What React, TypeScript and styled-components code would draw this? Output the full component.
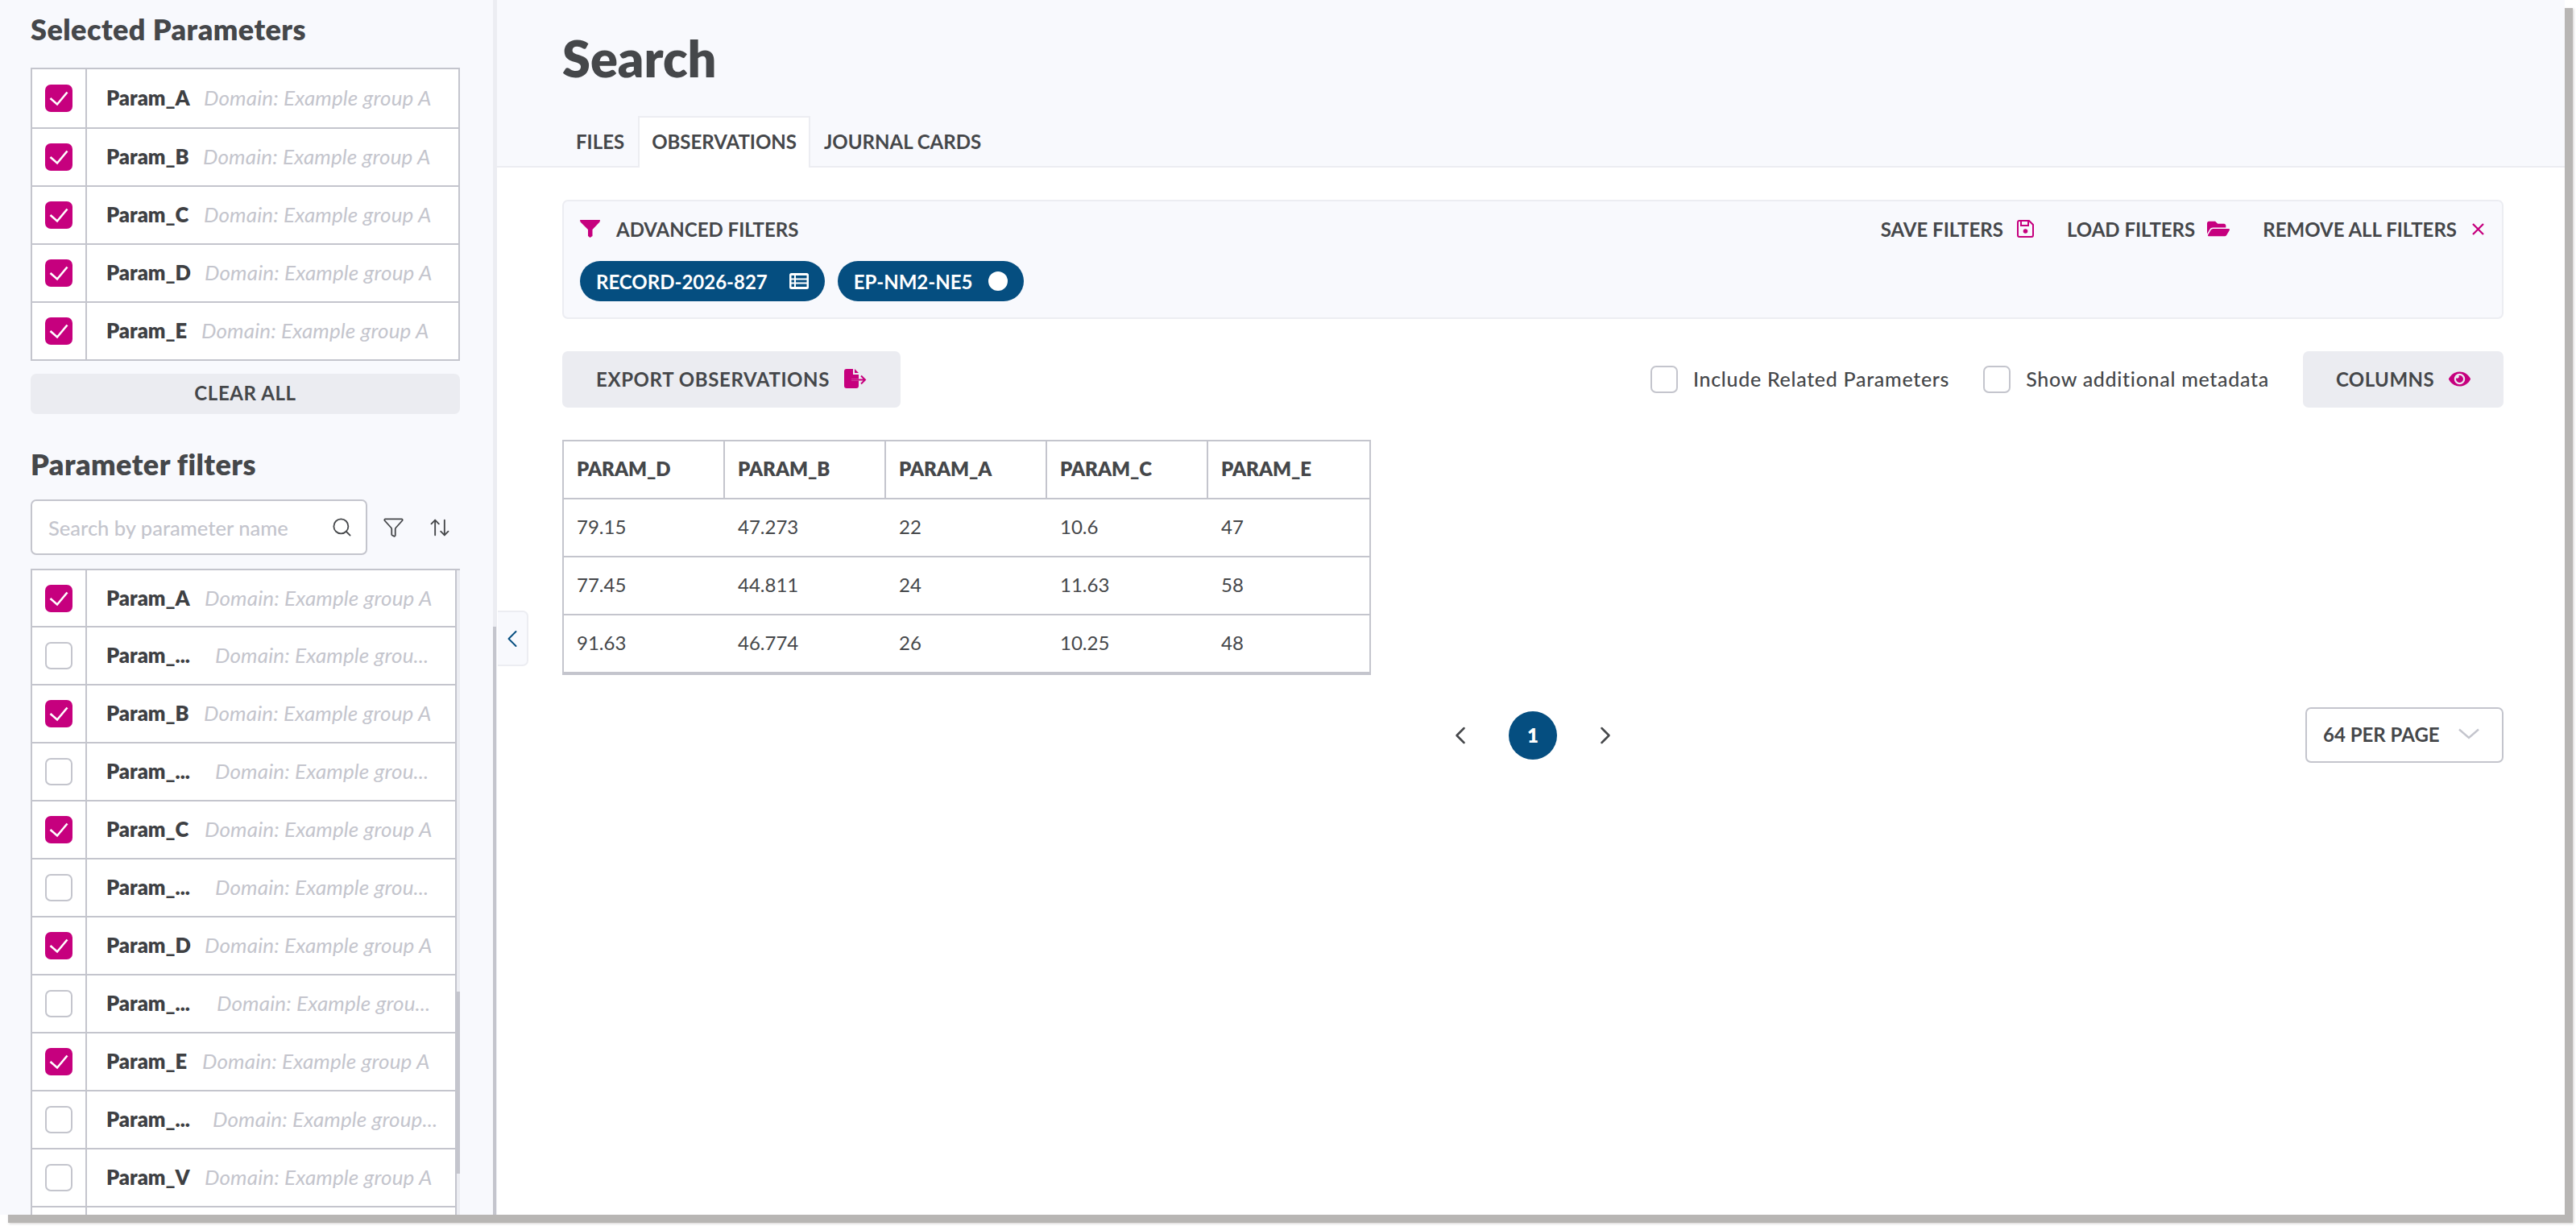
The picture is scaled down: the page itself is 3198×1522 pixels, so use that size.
import React from 'react'
import styled, { createGlobalStyle } from 'styled-components'
import { Search as SearchIcon, Funnel, ArrowUpDown, ChevronLeft, ChevronRight } from 'lucide-react'
import { FaFolderOpen, FaEye } from 'react-icons/fa'

const magenta = '#c6007e'
const navy = '#054e80'
const ink = '#45474a'
const line = '#c4c5cd'
const pale = '#ecedf2'
const wash = '#f8f9fd'

const GlobalStyle = createGlobalStyle`
  html, body { margin: 0; padding: 0; background: #fff; }
  body { font-family: Lato, "Noto Sans", sans-serif; color: ${ink}; }
  * { box-sizing: border-box; }
`

const Page = styled.div`
  width: 3198px;
  height: 1522px;
  background: #fff;
`

const Frame = styled.div`
  position: relative;
  display: flex;
  width: 3184px;
  height: 1508px;
  background: #fff;
  box-shadow: 10px 10px 0 #b8b6b4, 11px 11px 3px #d0cecc;
`

const Sidebar = styled.aside`
  position: relative;
  flex: 0 0 617px;
  height: 100%;
  padding: 14px 46px 0 38px;
  background: ${wash};
  overflow: hidden;
`

const OuterTrack = styled.div`
  position: absolute;
  top: 0;
  bottom: 0;
  right: 0;
  width: 5px;
  background: ${pale};
`

const OuterThumb = styled.div`
  position: absolute;
  top: 778px;
  bottom: 0;
  right: 1px;
  width: 4px;
  background: ${line};
`

const PanelTitle = styled.h2<{ $top?: number }>`
  margin: ${(p) => p.$top || 0}px 0 0 0;
  font-size: 36px;
  line-height: 44px;
  font-weight: 800;
  letter-spacing: 0.45px;
  color: ${ink};
`

const SelectedList = styled.div`
  margin-top: 26px;
  width: 533px;
  border: 2px solid ${line};
  border-bottom: 0;
  background: #fff;
`

const Row = styled.div<{ $first?: number }>`
  display: flex;
  align-items: center;
  height: 72px;
  border-bottom: 2px solid ${line};
  background: #fff;
  &:first-child { height: ${(p) => p.$first || 72}px; }
`

const CheckCell = styled.div`
  flex: 0 0 68px;
  align-self: stretch;
  display: flex;
  align-items: center;
  padding-left: 16px;
  border-right: 2px solid ${line};
`

const Box = styled.span<{ $on?: boolean }>`
  display: inline-flex;
  flex: 0 0 34px;
  width: 34px;
  height: 34px;
  border-radius: 7px;
  background: ${(p) => (p.$on ? magenta : '#fff')};
  border: ${(p) => (p.$on ? '0' : `2px solid ${line}`)};
`

const LabelCell = styled.div`
  display: flex;
  align-items: center;
  padding: 0 0 2px 24px;
  white-space: nowrap;
`

const ParamName = styled.span<{ $width: number }>`
  flex: 0 0 ${(p) => p.$width}px;
  font-size: 25.5px;
  font-weight: 800;
  color: #3e4043;
`

const Domain = styled.span`
  font-size: 26px;
  font-style: italic;
  letter-spacing: 0.15px;
  color: ${line};
`

const ClearButton = styled.button`
  display: block;
  margin-top: 16px;
  width: 533px;
  height: 50px;
  padding: 0 0 3px;
  border: 0;
  border-radius: 7px;
  background: #ebecf1;
  font-family: inherit;
  font-size: 24px;
  font-weight: 700;
  letter-spacing: 0.6px;
  color: ${ink};
`

const SearchRow = styled.div`
  display: flex;
  align-items: center;
  margin-top: 22px;
  height: 69px;
`

const SearchBox = styled.div`
  display: flex;
  align-items: center;
  justify-content: space-between;
  width: 418px;
  height: 69px;
  padding: 0 16px 0 20px;
  background: #fff;
  border: 2px solid ${line};
  border-radius: 7px;
  font-size: 25.5px;
  font-weight: 500;
  color: ${line};
`

const ToolIcon = styled.span<{ $left: number }>`
  display: inline-flex;
  margin-left: ${(p) => p.$left}px;
  color: ${ink};
`

const FilterFrame = styled.div`
  position: relative;
  margin-top: 17px;
  width: 533px;
  border-top: 2px solid ${line};
`

const FilterRows = styled.div`
  width: 529px;
  border-left: 2px solid ${line};
  border-right: 2px solid ${line};
`

const ListTrack = styled.div`
  position: absolute;
  top: 0;
  right: 0;
  width: 4px;
  height: 820px;
  background: ${pale};
`

const ListThumb = styled.div`
  position: absolute;
  top: 523px;
  right: 0;
  width: 4px;
  height: 226px;
  background: ${line};
`

const CollapseTab = styled.button`
  position: absolute;
  top: 758px;
  left: 618px;
  display: flex;
  align-items: center;
  justify-content: center;
  width: 38px;
  height: 69px;
  padding: 0;
  background: ${wash};
  border: 2px solid ${pale};
  border-left: 0;
  border-radius: 0 7px 7px 0;
  color: ${navy};
`

const Main = styled.main`
  flex: 1;
  display: flex;
  flex-direction: column;
  min-width: 0;
`

const Header = styled.header`
  height: 208px;
  padding: 0 0 0 81px;
  background: ${wash};
  border-bottom: 2px solid ${pale};
`

const PageTitle = styled.h1`
  margin: 0;
  height: 144px;
  padding-top: 39px;
  font-size: 63px;
  line-height: 66px;
  font-weight: 800;
  color: ${ink};
`

const Tabs = styled.nav`
  display: flex;
  height: 64px;
`

const Tab = styled.div<{ $active?: boolean }>`
  display: flex;
  align-items: center;
  height: 64px;
  padding: 0 15px 3px;
  font-size: 24px;
  font-weight: 700;
  white-space: nowrap;
  color: ${ink};
  border: 2px solid ${(p) => (p.$active ? pale : 'transparent')};
  border-bottom: 0;
  background: ${(p) => (p.$active ? '#fff' : 'transparent')};
`

const Content = styled.div`
  padding: 40px 76px 0 81px;
`

const FilterPanel = styled.section`
  height: 148px;
  padding: 14px 21px 0 20px;
  background: ${wash};
  border: 2px solid ${pale};
  border-radius: 7px;
`

const PanelHead = styled.div`
  display: flex;
  align-items: center;
  justify-content: space-between;
  height: 40px;
`

const HeadLabel = styled.div`
  display: flex;
  align-items: center;
  font-size: 24px;
  font-weight: 700;
  white-space: nowrap;
`

const Actions = styled.div`
  display: flex;
  align-items: center;
`

const ActionLink = styled.span<{ $gap?: number }>`
  display: flex;
  align-items: center;
  margin-left: ${(p) => p.$gap || 0}px;
  font-size: 24px;
  font-weight: 700;
  white-space: nowrap;
`

const IconSlot = styled.span<{ $gap: number; $color?: string }>`
  display: inline-flex;
  margin-left: ${(p) => p.$gap}px;
  color: ${(p) => p.$color || magenta};
`

const Chips = styled.div`
  display: flex;
  gap: 16px;
  margin-top: 20px;
`

const Chip = styled.div`
  display: flex;
  align-items: center;
  height: 50px;
  padding: 0 20px;
  border-radius: 25px;
  background: ${navy};
  color: #fff;
  font-size: 24px;
  font-weight: 700;
  white-space: nowrap;
`

const Dot = styled.span`
  display: inline-block;
  width: 24px;
  height: 24px;
  margin-left: 20px;
  border-radius: 50%;
  background: #fff;
`

const Toolbar = styled.div`
  display: flex;
  align-items: center;
  justify-content: space-between;
  margin-top: 40px;
`

const GreyButton = styled.button<{ $width: number; $spacing?: number }>`
  display: flex;
  align-items: center;
  justify-content: center;
  width: ${(p) => p.$width}px;
  height: 70px;
  padding: 0 0 2px;
  border: 0;
  border-radius: 7px;
  background: #ebecf1;
  color: ${ink};
  font-family: inherit;
  font-size: 24px;
  font-weight: 700;
  letter-spacing: ${(p) => p.$spacing || 0}px;
  white-space: nowrap;
`

const ToolbarRight = styled.div`
  display: flex;
  align-items: center;
`

const Toggle = styled.label`
  display: flex;
  align-items: center;
  margin-right: 42px;
  font-size: 25px;
  font-weight: 500;
  letter-spacing: 0.7px;
  white-space: nowrap;
`

const ToggleText = styled.span`
  margin: 0 0 2px 19px;
`

const DataTable = styled.table`
  margin-top: 40px;
  width: 1004px;
  table-layout: fixed;
  border-collapse: separate;
  border-spacing: 0;
  border: 2px solid ${line};
  font-size: 24px;
`

const HeadCell = styled.th`
  height: 72px;
  padding: 0 0 3px 16px;
  text-align: left;
  font-weight: 800;
  border-bottom: 2px solid ${line};
  border-right: 2px solid ${line};
  &:last-child { border-right: 0; }
`

const BodyCell = styled.td`
  height: 72px;
  padding: 0 0 3px 16px;
  font-weight: 400;
  border-bottom: 2px solid ${line};
`

const PagerRow = styled.div`
  display: grid;
  grid-template-columns: 1fr auto 1fr;
  align-items: center;
  margin-top: 40px;
  height: 69px;
`

const Pager = styled.div`
  grid-column: 2;
  display: flex;
  align-items: center;
  gap: 42px;
  color: ${ink};
`

const PageDot = styled.span`
  display: flex;
  align-items: center;
  justify-content: center;
  width: 60px;
  height: 60px;
  border-radius: 50%;
  background: ${navy};
  color: #fff;
  font-size: 24px;
  font-weight: 800;
`

const PerPage = styled.div`
  grid-column: 3;
  justify-self: end;
  display: flex;
  align-items: center;
  justify-content: space-between;
  width: 246px;
  height: 69px;
  padding: 0 28px 3px 20px;
  border: 2px solid ${line};
  border-radius: 7px;
  font-size: 24px;
  font-weight: 700;
  white-space: nowrap;
`

const Tick = () => (
  <svg width="34" height="34" viewBox="0 0 34 34" fill="none">
    <path d="M6.5 17 L15 24.5 L27.5 9.500" stroke="#fff" strokeWidth="2.6" />
  </svg>
)

const CheckBox = ({ on }: { on?: boolean }) => <Box $on={on}>{on && <Tick />}</Box>

const FunnelSolid = () => (
  <svg width="25" height="22" viewBox="0 0 25 22">
    <path d="M0 0 H25 L24.500 2.500 L15.500 12 V20 L12.500 22 L10 20 V12 L0.500 2.500 Z" fill={magenta} />
  </svg>
)

const TableGlyph = () => (
  <svg width="24" height="20" viewBox="0 0 24 20">
    <path
      fillRule="evenodd"
      d="M2.500 0 H21.500 A2.500 2.500 0 0 1 24 2.500 V17.500 A2.500 2.500 0 0 1 21.500 20 H2.500 A2.500 2.500 0 0 1 0 17.500 V2.500 A2.500 2.500 0 0 1 2.500 0 Z M2.500 3 V6.500 H6 V3 Z M8 3 V6.500 H21.500 V3 Z M2.500 8.500 V11.500 H6 V8.500 Z M8 8.500 V11.500 H21.500 V8.500 Z M2.500 13.500 V17 H6 V13.500 Z M8 13.500 V17 H21.500 V13.500 Z"
      fill="#fff"
    />
  </svg>
)

const SaveGlyph = () => (
  <svg width="21" height="22" viewBox="0 0 21 22" fill="none">
    <path d="M3 1 H15 L20 6 V19 A2 2 0 0 1 18 21 H3 A2 2 0 0 1 1 19 V3 A2 2 0 0 1 3 1 Z" stroke={magenta} strokeWidth="2" />
    <path d="M5 1.500 V7 H14 V1.500" stroke={magenta} strokeWidth="2" />
    <circle cx="10.500" cy="14" r="2.800" fill={magenta} />
  </svg>
)

const ExportGlyph = () => (
  <svg width="28" height="24" viewBox="0 0 28 24">
    <path d="M3 0 H11 V7 H18 V12.500 H9 V14.500 H18 V21 A3 3 0 0 1 15 24 H3 A3 3 0 0 1 0 21 V3 A3 3 0 0 1 3 0 Z" fill={magenta} />
    <path d="M13 0 L18 5 H13 Z" fill={magenta} />
    <path d="M9 13.500 H26 M21 8.500 L26 13.500 L21 18.500" stroke={magenta} strokeWidth="2" fill="none" />
  </svg>
)

const CrossGlyph = () => (
  <svg width="17" height="15" viewBox="0 0 17 15" fill="none">
    <path d="M2 1 L15 14 M15 1 L2 14" stroke={magenta} strokeWidth="2.300" />
  </svg>
)

const WideChevron = () => (
  <svg width="26" height="14" viewBox="0 0 26 14" fill="none">
    <path d="M1 1.500 L13 12 L25 1.500" stroke={line} strokeWidth="2.400" />
  </svg>
)

const selected = [
  { name: 'Param_A', width: 121 },
  { name: 'Param_B', width: 120 },
  { name: 'Param_C', width: 121 },
  { name: 'Param_D', width: 122 },
  { name: 'Param_E', width: 118 },
]

const filterRows = [
  { name: 'Param_A', domain: 'Domain: Example group A', on: true, width: 122 },
  { name: 'Param_...', domain: 'Domain: Example grou...', width: 135 },
  { name: 'Param_B', domain: 'Domain: Example group A', on: true, width: 121 },
  { name: 'Param_...', domain: 'Domain: Example grou...', width: 135 },
  { name: 'Param_C', domain: 'Domain: Example group A', on: true, width: 122 },
  { name: 'Param_...', domain: 'Domain: Example grou...', width: 135 },
  { name: 'Param_D', domain: 'Domain: Example group A', on: true, width: 122 },
  { name: 'Param_...', domain: 'Domain: Example grou...', width: 137 },
  { name: 'Param_E', domain: 'Domain: Example group A', on: true, width: 119 },
  { name: 'Param_...', domain: 'Domain: Example group...', width: 132 },
  { name: 'Param_V', domain: 'Domain: Example group A', width: 122 },
  { name: '', domain: '', width: 0 },
]

const columns = ['PARAM_D', 'PARAM_B', 'PARAM_A', 'PARAM_C', 'PARAM_E']
const rows = [
  ['79.15', '47.273', '22', '10.6', '47'],
  ['77.45', '44.811', '24', '11.63', '58'],
  ['91.63', '46.774', '26', '10.25', '48'],
]

export default function App() {
  return (
    <Page>
      <GlobalStyle />
      <Frame>
        <Sidebar>
          <PanelTitle>Selected Parameters</PanelTitle>
          <SelectedList>
            {selected.map((item) => (
              <Row key={item.name} $first={74}>
                <CheckCell><CheckBox on /></CheckCell>
                <LabelCell>
                  <ParamName $width={item.width}>{item.name}</ParamName>
                  <Domain>Domain: Example group A</Domain>
                </LabelCell>
              </Row>
            ))}
          </SelectedList>
          <ClearButton>CLEAR ALL</ClearButton>
          <PanelTitle $top={40}>Parameter filters</PanelTitle>
          <SearchRow>
            <SearchBox>
              Search by parameter name
              <SearchIcon size={27} strokeWidth={1.6} color={ink} />
            </SearchBox>
            <ToolIcon $left={19}><Funnel size={27} strokeWidth={1.6} /></ToolIcon>
            <ToolIcon $left={30}><ArrowUpDown size={28} strokeWidth={1.6} /></ToolIcon>
          </SearchRow>
          <FilterFrame>
            <FilterRows>
              {filterRows.map((item, idx) => (
                <Row key={idx} $first={71}>
                  <CheckCell>{item.name && <CheckBox on={item.on} />}</CheckCell>
                  <LabelCell>
                    <ParamName $width={item.width}>{item.name}</ParamName>
                    <Domain>{item.domain}</Domain>
                  </LabelCell>
                </Row>
              ))}
            </FilterRows>
            <ListTrack />
            <ListThumb />
          </FilterFrame>
          <OuterTrack />
          <OuterThumb />
        </Sidebar>
        <CollapseTab><ChevronLeft size={40} strokeWidth={1.3} /></CollapseTab>
        <Main>
          <Header>
            <PageTitle>Search</PageTitle>
            <Tabs>
              <Tab>FILES</Tab>
              <Tab $active>OBSERVATIONS</Tab>
              <Tab>JOURNAL CARDS</Tab>
            </Tabs>
          </Header>
          <Content>
            <FilterPanel>
              <PanelHead>
                <HeadLabel>
                  <FunnelSolid />
                  <IconSlot $gap={20} $color={ink}>ADVANCED FILTERS</IconSlot>
                </HeadLabel>
                <Actions>
                  <ActionLink>SAVE FILTERS<IconSlot $gap={17}><SaveGlyph /></IconSlot></ActionLink>
                  <ActionLink $gap={41}>LOAD FILTERS<IconSlot $gap={15}><FaFolderOpen size={28} /></IconSlot></ActionLink>
                  <ActionLink $gap={41}>REMOVE ALL FILTERS<IconSlot $gap={18}><CrossGlyph /></IconSlot></ActionLink>
                </Actions>
              </PanelHead>
              <Chips>
                <Chip>RECORD-2026-827<IconSlot $gap={27} $color="#fff"><TableGlyph /></IconSlot></Chip>
                <Chip>EP-NM2-NE5<Dot /></Chip>
              </Chips>
            </FilterPanel>
            <Toolbar>
              <GreyButton $width={420} $spacing={0.6}>EXPORT OBSERVATIONS<IconSlot $gap={18}><ExportGlyph /></IconSlot></GreyButton>
              <ToolbarRight>
                <Toggle><CheckBox /><ToggleText>Include Related Parameters</ToggleText></Toggle>
                <Toggle><CheckBox /><ToggleText>Show additional metadata</ToggleText></Toggle>
                <GreyButton $width={249} $spacing={0.45}>COLUMNS<IconSlot $gap={18}><FaEye size={27} /></IconSlot></GreyButton>
              </ToolbarRight>
            </Toolbar>
            <DataTable>
              <thead>
                <tr>{columns.map((c) => <HeadCell key={c}>{c}</HeadCell>)}</tr>
              </thead>
              <tbody>
                {rows.map((r, idx) => (
                  <tr key={idx}>{r.map((v, i) => <BodyCell key={i}>{v}</BodyCell>)}</tr>
                ))}
              </tbody>
            </DataTable>
            <PagerRow>
              <Pager>
                <ChevronLeft size={36} strokeWidth={1.7} />
                <PageDot>1</PageDot>
                <ChevronRight size={36} strokeWidth={1.7} />
              </Pager>
              <PerPage>64 PER PAGE<WideChevron /></PerPage>
            </PagerRow>
          </Content>
        </Main>
      </Frame>
    </Page>
  )
}
